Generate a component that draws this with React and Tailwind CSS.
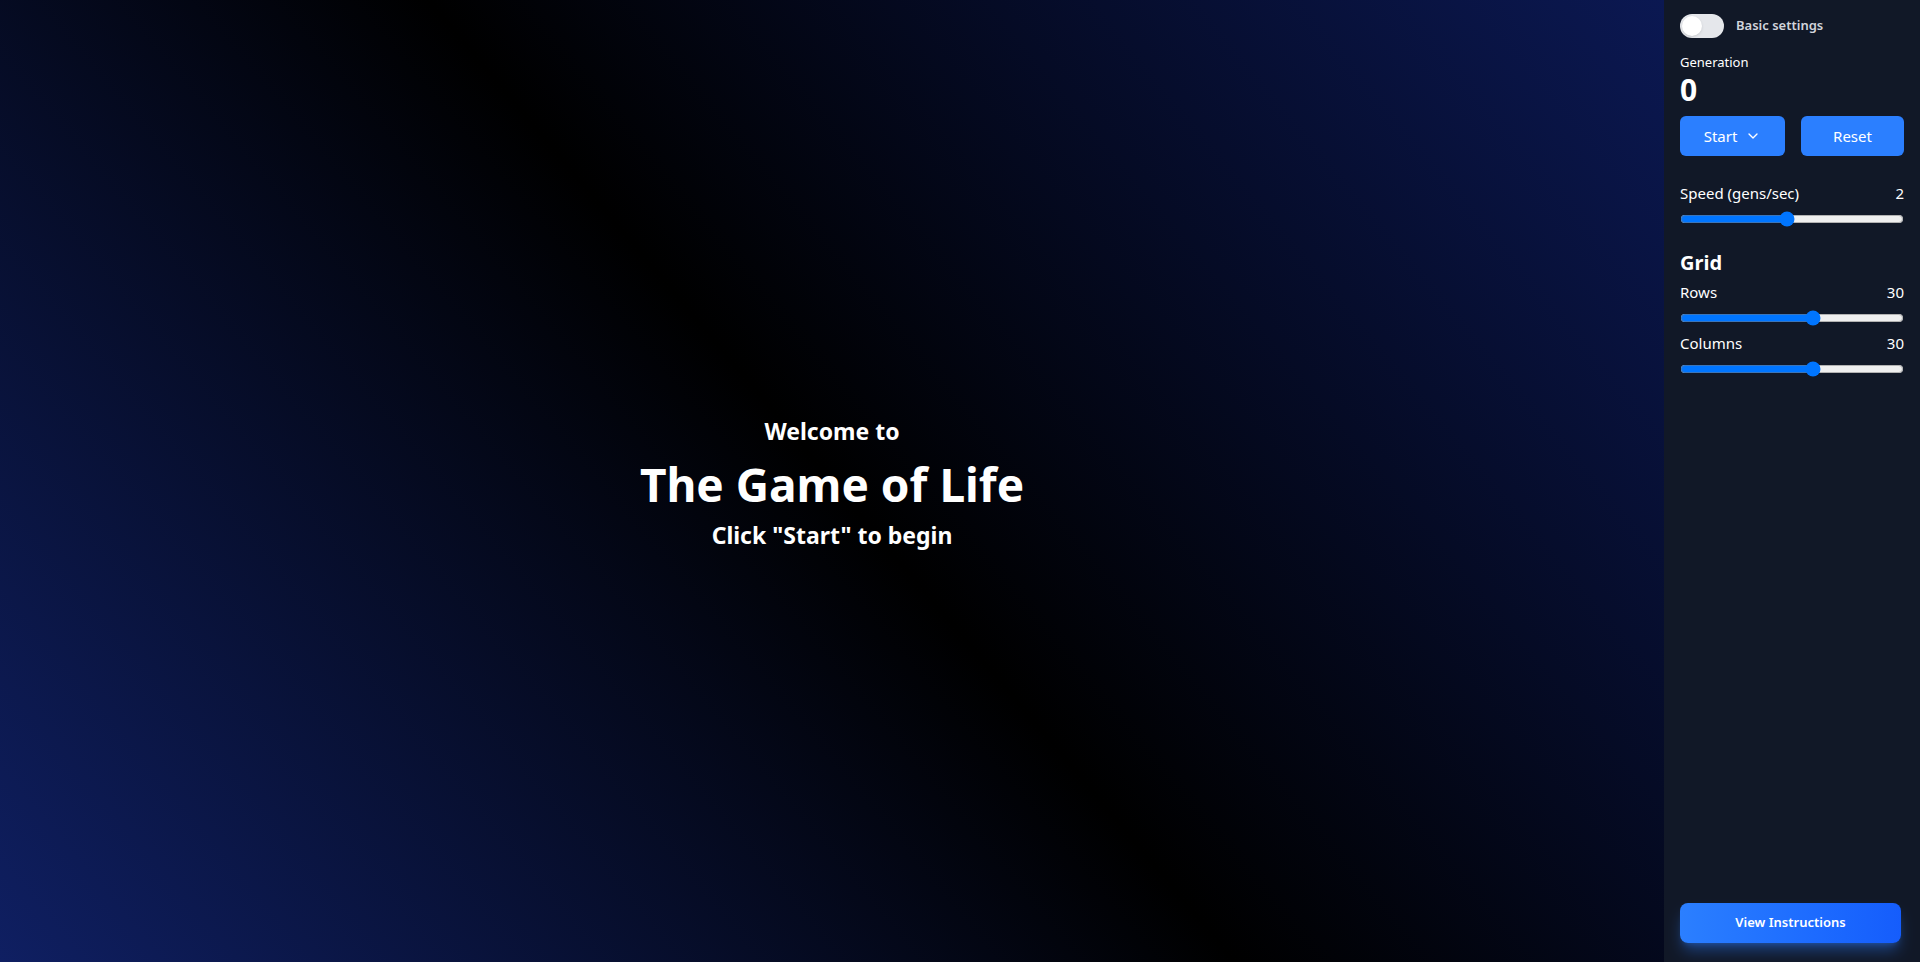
import React from "react";
import { ChevronDown } from "lucide-react";

function SliderRow({ label, value, min, max, step, val }) {
  return (
    <div className="flex flex-col">
      <div className="flex items-center justify-between text-[15px] leading-5 text-white">
        <span>{label}</span>
        <span>{value}</span>
      </div>
      <input
        type="range"
        min={min}
        max={max}
        step={step}
        defaultValue={val}
        className="mt-[8px] w-full"
      />
    </div>
  );
}

export default function App() {
  return (
    <div
      className="flex h-[962px] w-[1920px] overflow-hidden"
      style={{ fontFamily: '"Noto Sans", "Open Sans", sans-serif' }}
    >
      <main className="flex flex-1 flex-col items-center justify-center bg-[linear-gradient(50deg,#0f1f62_0%,#000000_50%,#0b1852_100%)] text-white">
        <div className="flex flex-col items-center pt-[3px]">
          <h2 className="text-[23px] font-bold leading-8">Welcome to</h2>
          <h1 className="mt-[9px] text-[46px] font-bold leading-[56px]">The Game of Life</h1>
          <p className="mt-[7px] text-[23px] font-bold leading-8">Click "Start" to begin</p>
        </div>
      </main>
      <aside className="flex w-64 flex-col bg-[#111827] px-4 pt-[14px] pb-[19px] text-white">
        <div className="flex items-center gap-3">
          <div className="relative h-6 w-11 rounded-full bg-gray-200">
            <div className="absolute left-[2px] top-[2px] h-5 w-5 rounded-full bg-white shadow" />
          </div>
          <span className="text-[13px] font-semibold text-gray-300">Basic settings</span>
        </div>
        <div className="mt-[14px] text-[13px] leading-5">Generation</div>
        <div className="text-3xl font-bold leading-9">0</div>
        <div className="mt-[8px] flex gap-4">
          <button className="flex h-10 w-[105px] items-center justify-center rounded-md bg-blue-500 text-[15px] text-white">
            Start
            <ChevronDown size={16} className="ml-2" strokeWidth={2} />
          </button>
          <button className="flex h-10 flex-1 items-center justify-center rounded-md bg-blue-500 text-[15px] text-white">
            Reset
          </button>
        </div>
        <div className="mt-[27px]">
          <SliderRow label="Speed (gens/sec)" value="2" min={0} max={4.2} step={0.1} val={2} />
        </div>
        <h3 className="mt-[22px] text-xl font-bold leading-7">Grid</h3>
        <div className="mt-[5px] flex flex-col gap-[7px]">
          <SliderRow label="Rows" value="30" min={0} max={50} step={1} val={30} />
          <SliderRow label="Columns" value="30" min={0} max={50} step={1} val={30} />
        </div>
        <div className="flex-1" />
        <button className="h-10 w-[221px] rounded-lg bg-gradient-to-r from-blue-500 to-blue-600 text-[13px] font-semibold text-white shadow-lg shadow-blue-500/40">
          View Instructions
        </button>
      </aside>
    </div>
  );
}
